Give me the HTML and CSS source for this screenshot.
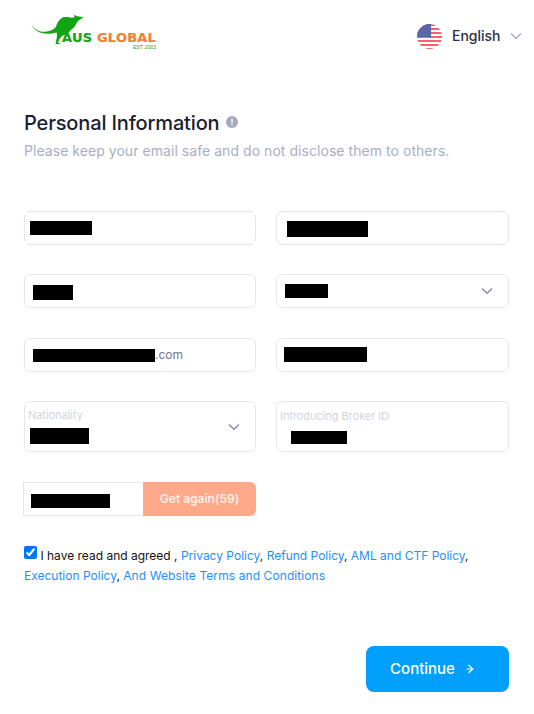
FILE: index.html
```html
<!DOCTYPE html>
<html lang="en">
<head>
  <meta charset="UTF-8">
  <meta name="viewport" content="width=device-width, initial-scale=1.0">
  <title>Personal Information</title>
  <link rel="stylesheet" href="styles.css">
</head>
<body>
  <header class="top">
    <div class="logo">
      <svg class="roo" viewBox="0 0 56 32" width="56" height="32">
        <path fill="#12a512" d="M1 10C4 14.500 8 17.800 14 17.800C18 17.800 22.500 16.500 25.500 13.500C27.500 8.500 29.500 4.500 33.500 3.300C37.500 2.300 41 4.500 44.500 3.300L44 1L47.500 2.200L53.500 3.300L49 6.300C47 7.500 46.500 9.800 45 12C43.500 14 41.500 15.500 40 17L38 19.500C36.500 20.500 34 21 32 22L29.500 25L28 28.800L31 29.800L25.500 30.200L26.300 26C27 23 27.500 21 26.500 18.500C22 19.800 17 20 13 19.300C8 18.500 3.500 15 1 10Z"/>
      </svg>
      <div class="logo-name"><span class="aus">AUS</span> GLOBAL</div>
      <div class="logo-est">EST. 2003</div>
    </div>
    <div class="lang">
      <svg class="flag" viewBox="0 0 25 25" width="25" height="25">
        <defs>
          <clipPath id="round"><circle cx="12.500" cy="12.500" r="12.500"/></clipPath>
          <pattern id="stars" width="2" height="2" patternUnits="userSpaceOnUse"><circle cx="1" cy="1" r=".45" fill="#a9b0d6"/></pattern>
        </defs>
        <g clip-path="url(#round)">
          <rect width="25" height="25" fill="#fff"/>
          <rect y="0" width="25" height="2" fill="#f4636c"/>
          <rect y="4" width="25" height="2" fill="#f4636c"/>
          <rect y="8" width="25" height="2" fill="#f4636c"/>
          <rect y="12" width="25" height="2" fill="#f4636c"/>
          <rect y="16" width="25" height="2" fill="#f4636c"/>
          <rect y="20" width="25" height="2" fill="#f4636c"/>
          <rect y="24" width="25" height="2" fill="#f4636c"/>
          <rect width="14" height="13" fill="#4f5b9e"/>
          <rect width="14" height="13" fill="url(#stars)"/>
        </g>
      </svg>
      <span class="lang-name">English</span>
      <svg class="chev chev-lang" viewBox="0 0 12 8" width="12" height="8"><path d="M1 1.500L6 6.200L11 1.500"/></svg>
    </div>
  </header>

  <main class="form">
    <h1>Personal Information
      <svg class="info" viewBox="0 0 12 12" width="12" height="12">
        <circle cx="6" cy="6" r="6" fill="#a6a9c0"/>
        <rect x="5.300" y="2.800" width="1.400" height="4" fill="#fff"/>
        <rect x="5.300" y="7.800" width="1.400" height="1.400" fill="#fff"/>
      </svg>
    </h1>
    <p class="sub">Please keep your email safe and do not disclose them to others.</p>

    <div class="fields">
      <div class="field"><span class="mask m-first"></span></div>
      <div class="field"><span class="mask m-last"></span></div>
      <div class="field"><span class="mask m-birth"></span></div>
      <div class="field select"><span class="mask m-gender"></span>
        <svg class="chev" viewBox="0 0 12 8" width="12" height="8"><path d="M1 1.500L6 6.200L11 1.500"/></svg>
      </div>
      <div class="field"><span class="mask m-mail"></span><span class="mail-end">.com</span></div>
      <div class="field"><span class="mask m-phone"></span></div>
      <div class="field tall select">
        <div>
          <label>Nationality</label>
          <span class="mask m-nation"></span>
        </div>
        <svg class="chev" viewBox="0 0 12 8" width="12" height="8"><path d="M1 1.500L6 6.200L11 1.500"/></svg>
      </div>
      <div class="field tall">
        <div>
          <label>Introducing Broker ID</label>
          <span class="mask m-broker"></span>
        </div>
      </div>
      <div class="code">
        <div class="code-input"><span class="mask m-code"></span></div>
        <button class="again">Get again(59)</button>
      </div>
    </div>

    <p class="agree">
      <input type="checkbox" checked> I have read and agreed ,
      <a href="#">Privacy Policy</a>, <a href="#">Refund Policy</a>, <a href="#">AML and CTF Policy</a>,
      <a href="#">Execution Policy</a>, <a href="#" class="terms">And Website Terms and Conditions</a>
    </p>

    <div class="actions">
      <button class="continue">Continue
        <svg viewBox="0 0 10 10" width="10" height="10"><path d="M2.500 1L6.800 5L2.500 9M.5 5H6.500"/></svg>
      </button>
    </div>
  </main>
</body>
</html>
```

FILE: styles.css
```css
* { box-sizing: border-box; }
body {
  margin: 0;
  font-family: Inter, Arial, sans-serif;
  background: white;
  color: #1a1d33;
}
.top {
  display: flex;
  justify-content: space-between;
  padding: 14px 12px 0 30px;
  height: 111px;
}
.logo { width: 126px; }
.roo { display: block; margin-bottom: -14px; }
.logo-name {
  font-family: "DejaVu Sans", sans-serif;
  font-weight: bold;
  font-size: 13px;
  letter-spacing: .2px;
  line-height: 12px;
  color: #f08232;
  text-align: right;
  white-space: nowrap;
  -webkit-text-stroke: .2px;
}
.aus { color: #12a512; }
.logo-est {
  font-family: "Liberation Sans", sans-serif;
  font-size: 5px;
  line-height: 6px;
  color: #12a512;
  text-align: right;
}
.lang {
  display: flex;
  align-items: center;
  height: 43px;
  font-size: 14px;
  font-weight: 500;
  color: #2a2e45;
}
.flag { margin-right: 9px; margin-top: 1px; }
.lang-name { padding-left: 1px; }
.chev { fill: none; stroke: #8a8da6; stroke-width: 1.500; }
.chev-lang { margin-left: 9.500px; stroke: #a9acc2; }
.form { padding: 0 25px 0 24px; }
h1 {
  margin: 0;
  font-size: 20px;
  letter-spacing: -.15px;
  line-height: 24px;
  font-weight: 500;
}
.info { margin-left: 1px; vertical-align: 2px; }
.sub {
  margin: 5px 0 0;
  font-size: 14px;
  letter-spacing: .05px;
  line-height: 22px;
  color: #a9adc4;
}
.fields {
  display: grid;
  grid-template-columns: 232px 233px;
  column-gap: 20px;
  row-gap: 29.500px;
  margin-top: 48.600px;
}
.field {
  display: flex;
  align-items: center;
  height: 34px;
  border: 1px solid #e6e6f0;
  border-radius: 6px;
  font-size: 12px;
  color: #6f7390;
}
.field.tall { height: 51px; }
.select { justify-content: space-between; }
.select .chev { margin-right: 15px; flex: none; }
.field label {
  display: block;
  font-size: 11px;
  letter-spacing: -.05px;
  line-height: 13px;
  color: #d3d4de;
  margin-left: 3px;
}
.mask { display: block; background: black; flex: none; }
.m-first { width: 62px; height: 14px; margin-left: 5px; }
.m-last { width: 81px; height: 16px; margin-left: 10px; margin-top: 2px; }
.m-birth { width: 40px; height: 15px; margin-left: 8px; margin-top: 3px; }
.m-gender { width: 43px; height: 14px; margin-left: 8px; }
.m-mail { width: 122px; height: 13px; margin-left: 8px; margin-top: 1px; }
.m-phone { width: 83px; height: 15px; margin-left: 7px; }
.m-nation { width: 59px; height: 16px; margin: 6px 0 0 5px; }
.m-broker { width: 56px; height: 13px; margin: 8px 0 0 14px; }
.m-code { width: 79px; height: 14px; margin-left: 7px; margin-top: 4px; }
.code { display: flex; height: 34px; margin-left: -1px; }
.code-input {
  display: flex;
  align-items: center;
  width: 120px;
  border: 1px solid #e6e6f0;
  border-right: none;
}
.again {
  width: 113px;
  border: none;
  background: #ffa98a;
  color: #ffefe8;
  border-radius: 0 6px 6px 0;
  font: 600 12px Inter, Arial, sans-serif;
}
.agree {
  margin: 30px 0 0;
  font-size: 12px;
  line-height: 20px;
  color: #111;
}
.agree input { margin: 0; width: 13px; height: 13px; vertical-align: 1px; }
.agree a { color: #1e90ff; text-decoration: none; }
.agree .terms { letter-spacing: .09px; }
.actions { display: flex; justify-content: flex-end; margin-top: 60px; }
.continue {
  display: flex;
  align-items: center;
  justify-content: center;
  gap: 11px;
  width: 143px;
  height: 46px;
  padding: 0 9px 0 0;
  border: none;
  border-radius: 8px;
  background: #009ffb;
  color: white;
  font: 500 15px Inter, Arial, sans-serif;
}
.continue svg { fill: none; stroke: white; stroke-width: 1.200; }
```
